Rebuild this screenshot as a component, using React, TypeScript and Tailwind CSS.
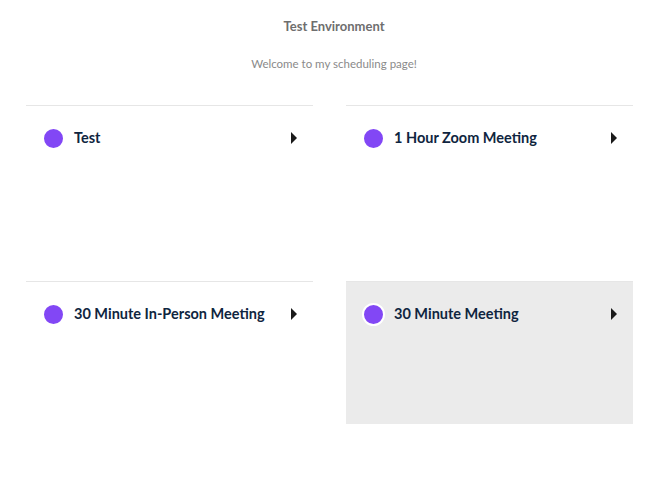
const events = [
  { id: 1, name: "Test", active: false },
  { id: 2, name: "1 Hour Zoom Meeting", active: false },
  { id: 3, name: "30 Minute In-Person Meeting", active: false },
  { id: 4, name: "30 Minute Meeting", active: true },
];

function CaretRight() {
  return (
    <svg viewBox="0 0 6 12" className="h-3 w-[6px] shrink-0" aria-hidden="true">
      <path d="M0 0 L6 6 L0 12 Z" fill="#1a1a1a" />
    </svg>
  );
}

export default function App() {
  return (
    <div
      className="min-h-[481px] w-[668px] bg-white"
      style={{ fontFamily: "Lato, 'Open Sans', sans-serif" }}
    >
      <div className="pt-[17px] text-center text-[13px] font-bold text-[#6e6e6e]">
        Test Environment
      </div>
      <div className="mt-[18px] text-center text-[11.5px] text-[#8a8a8a]">
        Welcome to my scheduling page!
      </div>
      <div className="ml-[26px] mt-[33px] grid w-[607px] grid-cols-2 gap-x-[33px] gap-y-[33px]">
        {events.map((event) => (
          <div
            key={event.id}
            className={`h-[143px] border-t border-[#e6e6e6] ${event.active ? "bg-[#ebebeb]" : "bg-white"}`}
          >
            <div className="flex items-center pl-[16px] pr-[16px] pt-[21px]">
              <span className="h-[23px] w-[23px] shrink-0 rounded-full border-2 border-white bg-[#8247f5]" />
              <span className="ml-[9px] flex-1 text-[14.5px] font-bold leading-[22px] text-[#0f2540]">
                {event.name}
              </span>
              <CaretRight />
            </div>
          </div>
        ))}
      </div>
    </div>
  );
}
